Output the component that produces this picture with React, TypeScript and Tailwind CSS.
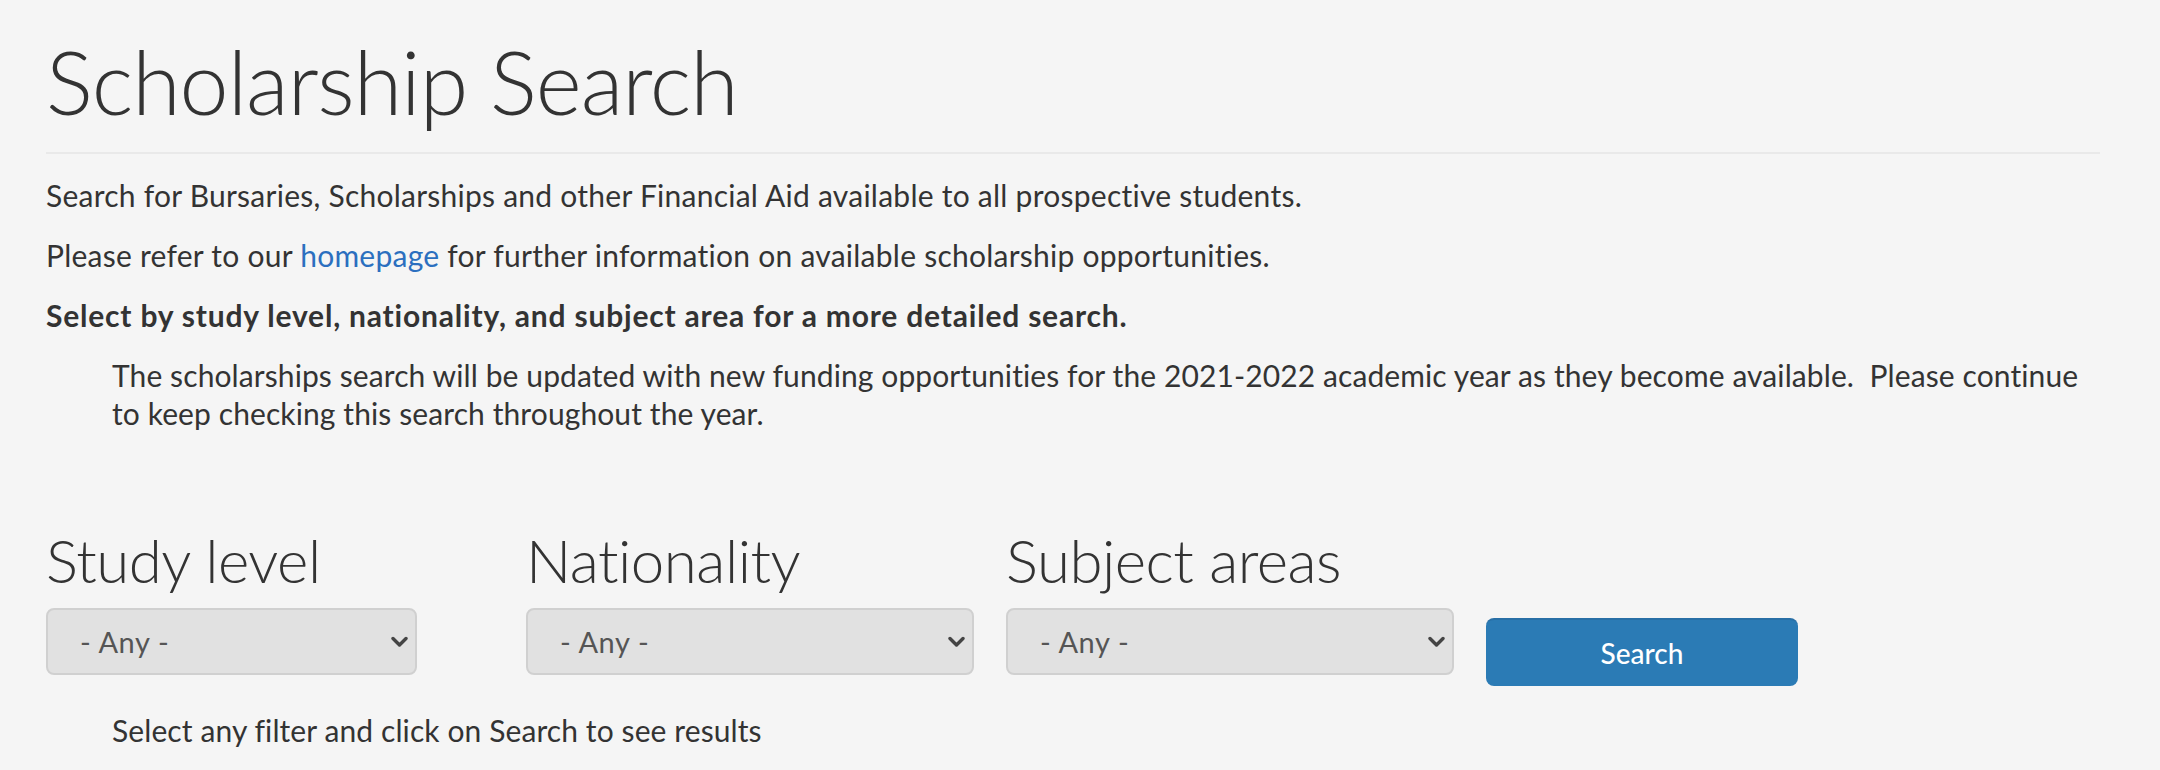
import React from 'react';

const filters = [
  { label: 'Study level', selectWidth: 'w-[371px]' },
  { label: 'Nationality', selectWidth: 'w-[448px]' },
  { label: 'Subject areas', selectWidth: 'w-[448px]' },
];

const Chevron: React.FC = () => (
  <svg
    className="pointer-events-none absolute right-[9px] top-1/2 -translate-y-1/2 w-[17px] h-[12px]"
    viewBox="0 0 17 12"
    fill="none"
    stroke="#444"
    strokeWidth={3.4}
    strokeLinecap="round"
    strokeLinejoin="round"
  >
    <path d="M2 2.5l6.5 6.5L15 2.5" />
  </svg>
);

const FilterSelect: React.FC<{ label: string; selectWidth: string }> = ({ label, selectWidth }) => (
  <div className="w-[448px] shrink-0">
    <label className="block text-[60px] leading-[72px] font-light text-[#333] tracking-[-0.5px]">{label}</label>
    <div className={`relative mt-[12px] ${selectWidth}`}>
      <select
        defaultValue="any"
        className="appearance-none w-full h-[67px] rounded-[8px] border-2 border-[#d0d0d0] bg-[#e1e1e1] pl-[32px] pr-[40px] text-[29px] tracking-[0.6px] text-[#555] outline-none"
      >
        <option value="any">- Any -</option>
      </select>
      <Chevron />
    </div>
  </div>
);

const App: React.FC = () => {
  return (
    <div className="min-h-[770px] bg-[#f5f5f5] font-['Lato',sans-serif] text-[#333]">
      <div className="pl-[46px] w-[2100px] pt-[32px]">
        <h1 className="text-[88px] leading-[99px] font-light tracking-[-1px]">Scholarship Search</h1>
        <div className="mt-[21px] h-[2px] bg-[#e9e9e9]" />

        <div className="mt-[22px] text-[30px] leading-[38px] tracking-[0.25px]">
          <p className="mb-[22px]">
            Search for Bursaries, Scholarships and other Financial Aid available to all prospective students.
          </p>
          <p className="mb-[22px]">
            Please refer to our{' '}
            <a href="#" className="text-[#2b6fbf]">
              homepage
            </a>{' '}
            for further information on available scholarship opportunities.
          </p>
          <p className="mb-[22px] font-bold tracking-[0.8px]">
            Select by study level, nationality, and subject area for a more detailed search.
          </p>
          <p className="pl-[66px] tracking-[0.1px]">
            The scholarships search will be updated with new funding opportunities for the 2021-2022 academic year as
            they become available.&nbsp; Please continue
            <br />
            to keep checking this search throughout the year.
          </p>
        </div>

        <div className="mt-[92px] flex items-start gap-[32px]">
          {filters.map((f) => (
            <FilterSelect key={f.label} label={f.label} selectWidth={f.selectWidth} />
          ))}
          <button className="mt-[94px] w-[312px] h-[68px] rounded-[8px] bg-[#2b7bb5] border-t-2 border-[#286fa6] text-white text-[28px] font-medium">
            Search
          </button>
        </div>

        <p className="mt-[25px] pl-[66px] text-[30px] leading-[38px] tracking-[0.1px]">
          Select any filter and click on Search to see results
        </p>
      </div>
    </div>
  );
};

export default App;
